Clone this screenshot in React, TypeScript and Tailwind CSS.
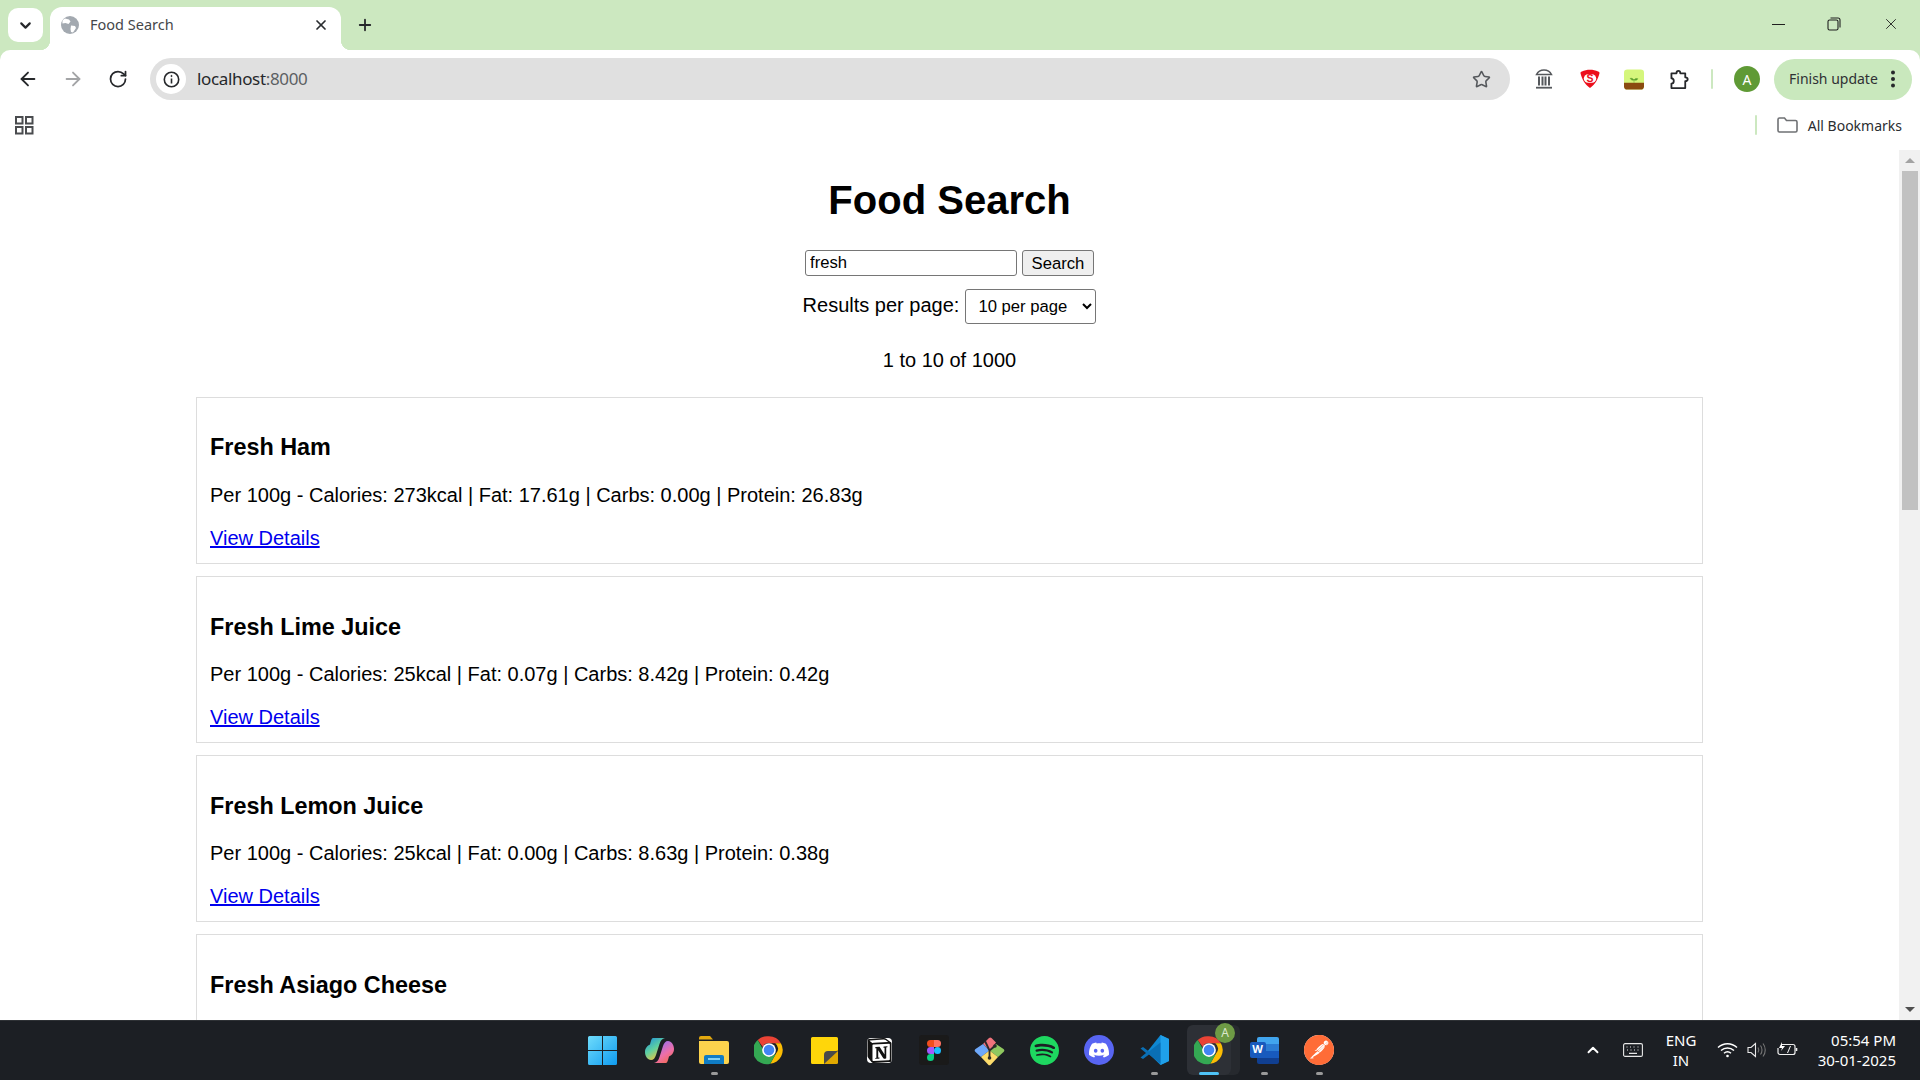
import { ArrowLeft, ArrowRight, ChevronDown, ChevronUp, Plus, RotateCw, Star, X } from 'lucide-react';
import { SiDiscord, SiNotion, SiPostman, SiSpotify } from 'react-icons/si';

const foods = [
  { name: 'Fresh Ham', info: 'Per 100g - Calories: 273kcal | Fat: 17.61g | Carbs: 0.00g | Protein: 26.83g' },
  { name: 'Fresh Lime Juice', info: 'Per 100g - Calories: 25kcal | Fat: 0.07g | Carbs: 8.42g | Protein: 0.42g' },
  { name: 'Fresh Lemon Juice', info: 'Per 100g - Calories: 25kcal | Fat: 0.00g | Carbs: 8.63g | Protein: 0.38g' },
];

function ChromeLogo({ size = 30 }: { size?: number }) {
  return (
    <svg width={size} height={size} viewBox="0 0 48 48">
      <path d="M24 2a22 22 0 0 1 19 11H24a11 11 0 0 0-10 6L6 8a22 22 0 0 1 18-6z" fill="#ea4335" />
      <path d="M43 13a22 22 0 0 1-17 33l9-16a11 11 0 0 0-1-17z" fill="#fbbc04" />
      <path d="M6 8l9 16a11 11 0 0 0 11 11l-0 0 9-5-9 16A22 22 0 0 1 6 8z" fill="#34a853" />
      <circle cx="24" cy="24" r="11" fill="#fff" />
      <circle cx="24" cy="24" r="8.5" fill="#4285f4" />
    </svg>
  );
}

function TabStrip() {
  return (
    <div className="flex h-[50px] shrink-0 bg-[#cce8c0]">
      <div className="ml-[8px] mt-[8px] flex h-[34px] w-[35px] items-center justify-center rounded-[10px] bg-white">
        <ChevronDown size={17} strokeWidth={3} className="text-[#26282b]" />
      </div>
      <div className="relative ml-[7px] mt-[7px] flex h-[43px] w-[291px] items-center rounded-t-[12px] bg-white pb-[7px] pl-[11px] pr-[12px]">
        <span className="absolute bottom-0 left-[-10px] h-[10px] w-[10px] bg-[radial-gradient(circle_at_0_0,#cce8c0_10px,#fff_10.5px)]" />
        <span className="absolute bottom-0 right-[-10px] h-[10px] w-[10px] bg-[radial-gradient(circle_at_100%_0,#cce8c0_10px,#fff_10.5px)]" />
        <svg width="18" height="18" viewBox="0 0 18 18">
          <circle cx="9" cy="9" r="9" fill="#a3a9b0" />
          <path d="M4 2.5l4 1 1.5 2-2 2.5-3-1-3 .5C1 5 2 3.5 4 2.5zM10 9.5l4 .5 1 2-3 4.5-2-.5-.5-3z" fill="#fff" />
        </svg>
        <span className="ml-[11px] flex-1 text-[14.500px] text-[#45474a]">Food Search</span>
        <X size={16} strokeWidth={2.6} className="text-[#2a2c2f]" />
      </div>
      <div className="ml-[15px] mt-[16px]">
        <Plus size={18} strokeWidth={2.4} className="text-[#26282b]" />
      </div>
      <div className="flex-1" />
      <div className="flex h-[48px] items-center">
        <div className="flex w-[56px] justify-center">
          <span className="h-[1px] w-[13px] bg-[#1f1f1f]" />
        </div>
        <div className="flex w-[56px] justify-center">
          <svg width="14" height="14" viewBox="0 0 14 14" fill="none" stroke="#1f1f1f" strokeWidth="1.1">
            <rect x="1" y="3" width="10" height="10" rx="1.6" />
            <path d="M3.5 1h7.5a2 2 0 0 1 2 2v7.5" />
          </svg>
        </div>
        <div className="mr-[1px] flex w-[57px] justify-center">
          <X size={18} strokeWidth={1.2} className="text-[#1f1f1f]" />
        </div>
      </div>
    </div>
  );
}

function Toolbar() {
  return (
    <div className="h-[50px] shrink-0 bg-[#cce8c0]">
      <div className="flex h-full items-start rounded-t-[10px] bg-white pt-[8px]">
        <div className="flex h-[42px] w-[150px] items-center pl-[17px]">
          <ArrowLeft size={22} strokeWidth={2} className="text-[#26282b]" />
          <ArrowRight size={22} strokeWidth={2} className="ml-[23px] text-[#a3a4a6]" />
          <RotateCw size={20} strokeWidth={2.1} className="ml-[24px] text-[#26282b]" />
        </div>
        <div className="flex h-[42px] w-[1360px] items-center rounded-full bg-[#e0e0e0] pl-[6px] pr-[19px]">
          <div className="flex h-[30px] w-[30px] items-center justify-center rounded-full bg-white">
            <svg width="17" height="17" viewBox="0 0 17 17" fill="none" stroke="#26282b" strokeWidth="1.6">
              <circle cx="8.5" cy="8.5" r="7.2" />
              <path d="M8.5 7.5v5" />
              <circle cx="8.5" cy="5" r="0.6" fill="#26282b" strokeWidth="1" />
            </svg>
          </div>
          <span className="ml-[11px] flex-1 text-[17px] tracking-[-0.35px] text-[#26282b]">
            localhost<span className="text-[#5c5f63]">:8000</span>
          </span>
          <Star size={19} strokeWidth={2} className="text-[#55585c]" />
        </div>
        <div className="flex h-[42px] items-center">
          <div className="ml-[24px] flex w-[20px] justify-center">
            <svg width="18" height="20" viewBox="0 0 18 20" fill="none" stroke="#55585c" strokeWidth="1.5">
              <path d="M1.5 5.5C3 2.5 6 1 9 1s6 1.5 7.5 4.5z" />
              <path d="M4 7.5v9M7.5 7.5v9M10.5 7.5v9M14 7.5v9" strokeWidth="2" />
              <path d="M1 18.7h16" strokeWidth="1.8" />
            </svg>
          </div>
          <div className="ml-[26px] flex w-[20px] justify-center">
            <svg width="21" height="20" viewBox="0 0 21 20">
              <path d="M2 2c5-2.200 12-2.200 17 0 1 0 1.800 1 1.400 2.300C19 10 16 16 10.500 19.500 5 16 2 10 .6 4.300.2 3 1 2 2 2z" fill="#ec0f1c" />
              <rect x="4" y="5" width="13" height="9" rx="4.500" fill="#fff" />
              <text x="10.500" y="13.200" textAnchor="middle" fontSize="11" fontWeight="700" fontFamily="'Liberation Sans',sans-serif" fill="#ec0f1c">S</text>
            </svg>
          </div>
          <div className="ml-[24px] flex w-[20px] justify-center">
            <svg width="21" height="21" viewBox="0 0 21 21">
              <rect width="21" height="21" rx="3.500" fill="#d5f67c" />
              <path d="M0 14h21v3.500a3.500 3.500 0 0 1-3.500 3.500h-14A3.500 3.500 0 0 1 0 17.500z" fill="#8a4b10" />
              <path d="M10.500 14v-3M10.500 11c-1-1.700-2.500-2-4-1.700.6 1.600 2.300 2.300 4 1.700zM10.500 11c1-1.500 2.500-1.800 4-1.300-.7 1.500-2.400 2-4 1.300z" fill="#5aa02c" stroke="#5aa02c" strokeWidth=".5" />
            </svg>
          </div>
          <div className="ml-[26px] flex w-[20px] justify-center">
            <svg width="21" height="21" viewBox="0 0 21 21" fill="none" stroke="#26282b" strokeWidth="1.9" strokeLinejoin="round">
              <path d="M1.500 4h5.300c0-3.300 4-3.300 4 0h5.200v4.200c3.400 0 3.400 4 0 4v7.300H1.500v-4.700c3.300 0 3.300-5.600 0-5.600z" />
            </svg>
          </div>
          <span className="ml-[21px] h-[20px] w-[2px] rounded-full bg-[#cce8c0]" />
          <div className="ml-[21px] flex h-[26px] w-[26px] items-center justify-center rounded-full bg-[#5f9a35] text-[14px] text-white">A</div>
          <div className="ml-[14px] flex h-[41px] w-[138px] items-center rounded-full bg-[#c9e8bd] pl-[15px]">
            <span className="pb-[1px] text-[14px] text-[#2f3134]">Finish update</span>
            <svg width="6" height="18" viewBox="0 0 6 18" className="ml-[12px]" fill="#26282b">
              <circle cx="3" cy="2.500" r="2" />
              <circle cx="3" cy="9" r="2" />
              <circle cx="3" cy="15.500" r="2" />
            </svg>
          </div>
        </div>
      </div>
    </div>
  );
}

function BookmarksBar() {
  return (
    <div className="flex h-[50px] shrink-0 items-center bg-white pl-[15px] pr-[18px]">
      <svg width="19" height="19" viewBox="0 0 19 19" fill="none" stroke="#4a4c4f" strokeWidth="2">
        <rect x="1" y="1" width="6.500" height="6.500" />
        <rect x="11" y="1" width="6.500" height="6.500" />
        <rect x="1" y="11" width="6.500" height="6.500" />
        <rect x="11" y="11" width="6.500" height="6.500" />
      </svg>
      <div className="flex-1" />
      <span className="h-[20px] w-[2px] rounded-full bg-[#cce8c0]" />
      <svg width="21" height="16" viewBox="0 0 21 16" fill="none" stroke="#6f7174" strokeWidth="1.600" className="ml-[20px]">
        <path d="M1 2.500C1 1.500 1.500 1 2.500 1h5l2 2.500h9c1 0 1.500.5 1.500 1.500v8.500c0 1-.5 1.500-1.500 1.500h-16C1.500 15 1 14.500 1 13.500z" />
      </svg>
      <span className="ml-[10px] text-[14px] text-[#2b2d30]">All Bookmarks</span>
    </div>
  );
}

function FoodCard({ name, info }: { name: string; info: string }) {
  return (
    <div className="mb-[11.900px] border border-[#ddd] px-[13px] pb-[12px] pt-[13.500px] leading-[23px]">
      <h3 className="mb-[22.400px] mt-[23.400px] text-[23.400px] font-bold leading-[27px] text-black">{name}</h3>
      <p className="mb-[20px] text-[20px] leading-[23px] text-black">{info}</p>
      <a href="#" className="text-[20px] leading-[23px] text-[#0000ee] underline">
        View Details
      </a>
    </div>
  );
}

function Page() {
  return (
    <div className="min-w-0 flex-1 overflow-hidden bg-white font-['Liberation_Sans',Arial,sans-serif]">
      <div className="mx-auto w-[1507px]">
        <h1 className="pt-[27px] text-center text-[40px] font-bold leading-[46px] text-black">Food Search</h1>
        <div className="mt-[27px] flex items-center justify-center">
          <input
            defaultValue="fresh"
            className="h-[26px] w-[212px] rounded-[3px] border border-[#767676] px-[4px] text-[16.670px] text-black outline-none"
          />
          <button className="ml-[5px] h-[26px] w-[72px] rounded-[3px] border border-[#767676] bg-[#efefef] pb-[3px] text-[16.670px] text-black">
            Search
          </button>
        </div>
        <div className="mt-[13px] flex items-center justify-center text-[20px] text-black">
          <span className="mb-[3px]">Results per page:</span>
          <select
            defaultValue="10"
            className="ml-[6px] h-[35px] w-[131px] rounded-[3px] border border-[#767676] bg-white pl-[8px] text-[16.670px] text-black"
          >
            <option value="10">10 per page</option>
            <option value="20">20 per page</option>
            <option value="50">50 per page</option>
          </select>
        </div>
        <div className="mt-[24.500px] text-center text-[20px] leading-[23px] text-black">1 to 10 of 1000</div>
        <div className="mt-[25px]">
          {foods.map((food) => (
            <FoodCard key={food.name} name={food.name} info={food.info} />
          ))}
          <div className="h-[167px] border border-[#ddd] px-[13px] pt-[13.500px]">
            <h3 className="mt-[23.400px] text-[23.400px] font-bold leading-[27px] text-black">Fresh Asiago Cheese</h3>
          </div>
        </div>
      </div>
    </div>
  );
}

function Scrollbar() {
  return (
    <div className="flex w-[21px] shrink-0 flex-col bg-[#f1f1f1]">
      <div className="flex h-[21px] items-center justify-center">
        <span className="h-0 w-0 border-x-[5px] border-b-[5px] border-x-transparent border-b-[#a3a3a3]" />
      </div>
      <div className="ml-[3px] h-[339px] w-[16px] bg-[#c1c1c1]" />
      <div className="flex-1" />
      <div className="flex h-[21px] items-center justify-center">
        <span className="h-0 w-0 border-x-[5px] border-t-[5px] border-x-transparent border-t-[#505050]" />
      </div>
    </div>
  );
}

function Tile({ dot, active, children }: { dot?: boolean; active?: boolean; children: React.ReactNode }) {
  return (
    <div className="relative flex h-[59px] w-[55px] items-center justify-center pb-[1px]">
      {active && (
        <>
          <span className="absolute left-[9px] top-[4px] h-[50px] w-[49px] rounded-[6px] bg-[#26292e]" />
          <span className="absolute left-[5px] top-[4px] h-[50px] w-[44px] rounded-[6px] bg-[#2d3036]" />
          <span className="absolute bottom-[5px] left-[17px] h-[3px] w-[20px] rounded-full bg-[#4fc3f7]" />
        </>
      )}
      <div className="relative flex items-center justify-center">{children}</div>
      {dot && <span className="absolute bottom-[5px] left-[24px] h-[3px] w-[7px] rounded-full bg-[#9a9a9a]" />}
    </div>
  );
}

function Taskbar() {
  return (
    <div className="grid h-[60px] shrink-0 grid-cols-[1fr_auto_1fr] border-t border-[#2e3135] bg-[#1c1f24]">
      <div />
      <div className="flex pl-[3px]">
        <Tile>
          <svg width="29" height="29" viewBox="0 0 29 29" className="mr-[3px]">
            <defs>
              <linearGradient id="win" x1="0" y1="0" x2="1" y2="1">
                <stop offset="0" stopColor="#6fdcfb" />
                <stop offset="1" stopColor="#0f9bf0" />
              </linearGradient>
            </defs>
            <path d="M0 1.500A1.500 1.500 0 0 1 1.500 0H14v14H0zM15 0h12.500A1.500 1.500 0 0 1 29 1.500V14H15zM0 15h14v14H1.500A1.500 1.500 0 0 1 0 27.500zM15 15h14v12.500a1.500 1.500 0 0 1-1.500 1.500H15z" fill="url(#win)" />
          </svg>
        </Tile>
        <Tile>
          <svg width="29" height="27" viewBox="0 0 29 27">
            <defs>
              <linearGradient id="cpa" x1="0" y1="0" x2="0.6" y2="1">
                <stop offset="0" stopColor="#1b8fe0" />
                <stop offset=".55" stopColor="#5fd0a0" />
                <stop offset="1" stopColor="#f5c33b" />
              </linearGradient>
              <linearGradient id="cpb" x1="0" y1="0" x2="0.6" y2="1">
                <stop offset="0" stopColor="#f46a3c" />
                <stop offset=".5" stopColor="#ee6fa8" />
                <stop offset="1" stopColor="#9a70ee" />
              </linearGradient>
            </defs>
            <path d="M8 1H20C17 1.500 15.500 4 14.500 7L11 18C10 21 8.500 23 6 23C2.500 23 0 19 0 15C0 11 2.500 8.500 5 7.500C6 4 6.500 1 8 1Z" fill="url(#cpa)" />
            <path d="M8 1H20C17 1.500 15.500 4 14.500 7L11 18C10 21 8.500 23 6 23C2.500 23 0 19 0 15C0 11 2.500 8.500 5 7.500C6 4 6.500 1 8 1Z" fill="url(#cpb)" transform="rotate(180 14.500 13.500)" />
          </svg>
        </Tile>
        <Tile dot>
          <svg width="30" height="28" viewBox="0 0 30 28">
            <path d="M0 2a2 2 0 0 1 2-2h9l3 3.500H0z" fill="#e3a90f" />
            <path d="M0 5h28a2 2 0 0 1 2 2v19a2 2 0 0 1-2 2H2a2 2 0 0 1-2-2z" fill="#fcd34d" />
            <path d="M5 21a2 2 0 0 1 2-2h16a2 2 0 0 1 2 2v7H5z" fill="#0f7cc4" />
            <rect x="9" y="22" width="12" height="2" fill="#7fd0f5" />
          </svg>
        </Tile>
        <Tile>
          <ChromeLogo />
        </Tile>
        <Tile>
          <svg width="27" height="27" viewBox="0 0 27 27">
            <path d="M1.500 0h24A1.500 1.500 0 0 1 27 1.500V13L13 27H1.500A1.500 1.500 0 0 1 0 25.500v-24A1.500 1.500 0 0 1 1.500 0z" fill="#ffd60a" />
            <path d="M27 13v12.500a1.500 1.500 0 0 1-1.500 1.500H13V19z" fill="#e0a800" />
            <path d="M13 27V18a4 4 0 0 1 4-4h10z" fill="#4a4a48" />
          </svg>
        </Tile>
        <Tile>
          <div className="flex h-[25px] w-[25px] items-center justify-center rounded-[4px] bg-white">
            <SiNotion size={25} className="text-[#111]" />
          </div>
        </Tile>
        <Tile>
          <div className="flex h-[30px] w-[30px] items-center justify-center rounded-[3px] bg-[#1a1a1a]">
            <svg width="14" height="21" viewBox="0 0 38 57">
              <path d="M19 28.500a9.500 9.500 0 1 1 19 0 9.500 9.500 0 0 1-19 0z" fill="#1abcfe" />
              <path d="M0 47.500A9.500 9.500 0 0 1 9.500 38H19v9.500a9.500 9.500 0 1 1-19 0z" fill="#0acf83" />
              <path d="M19 0v19h9.500a9.500 9.500 0 1 0 0-19z" fill="#ff7262" />
              <path d="M0 9.500A9.500 9.500 0 0 0 9.500 19H19V0H9.500A9.500 9.500 0 0 0 0 9.500z" fill="#f24e1e" />
              <path d="M0 28.500A9.500 9.500 0 0 0 9.500 38H19V19H9.500A9.500 9.500 0 0 0 0 28.500z" fill="#a259ff" />
            </svg>
          </div>
        </Tile>
        <Tile>
          <svg width="31" height="31" viewBox="0 0 31 31">
            <path d="M15.500 15.500L9 9l6-6a2 2 0 0 1 2.500 0L22 7.500z" fill="#f0737c" />
            <path d="M15.500 15.500L22 9l7.500 5a2 2 0 0 1 0 3L24 22z" fill="#8fc860" />
            <path d="M15.500 15.500L9 9l-7.500 5a2 2 0 0 0 0 3L7 22z" fill="#6ea8fa" />
            <path d="M15.500 15.500L7 22l7 7.500a2 2 0 0 0 3 0L24 22z" fill="#fcdc6c" />
            <path d="M11 6l4.500 9.500M15.500 15.500v7M15.500 15.500L21 11" stroke="#2b2b2b" strokeWidth="1.800" fill="none" />
            <circle cx="15.500" cy="23" r="1.800" fill="#2b2b2b" />
            <circle cx="21" cy="11" r="1.800" fill="#2b2b2b" />
          </svg>
        </Tile>
        <Tile>
          <SiSpotify size={29} className="text-[#1ed760]" />
        </Tile>
        <Tile>
          <div className="flex h-[30px] w-[30px] items-center justify-center rounded-full bg-[#5865f2]">
            <SiDiscord size={20} className="text-white" />
          </div>
        </Tile>
        <Tile dot>
          <svg width="30" height="30" viewBox="0 0 30 30">
            <path d="M21.500 0L30 4v22l-8.500 4L8 17l13.500-17z" fill="#0e87d2" />
            <path d="M21.500 0L21.500 30 30 26V4z" fill="#1fa0ea" />
            <path d="M21.500 7.500L10 16.500 4 12 1.500 13.500 7 18l-5.500 4.500L4 24l6-4.500 11.500 9z" fill="#0a6fb5" />
          </svg>
        </Tile>
        <Tile active>
          <ChromeLogo />
          <span className="absolute right-[-11px] top-[-12px] flex h-[20px] w-[20px] items-center justify-center rounded-full bg-[#6e9a45] text-[12px] text-[#dce8cc]">A</span>
        </Tile>
        <Tile dot>
          <div className="relative h-[27px] w-[29px]">
            <div className="ml-[7px] flex h-[27px] w-[22px] flex-col rounded-[2px]">
              <span className="h-[7px] rounded-t-[2px] bg-[#41a5ee]" />
              <span className="h-[7px] bg-[#2b7cd3]" />
              <span className="h-[7px] bg-[#185abd]" />
              <span className="h-[6px] rounded-b-[2px] bg-[#103f91]" />
            </div>
            <span className="absolute left-0 top-[5px] flex h-[16px] w-[16px] items-center justify-center rounded-[2px] bg-[#185abd] text-[11px] font-bold text-white">W</span>
          </div>
        </Tile>
        <Tile dot>
          <div className="flex h-[30px] w-[30px] items-center justify-center rounded-full bg-white">
            <SiPostman size={30} className="text-[#ff6c37]" />
          </div>
        </Tile>
      </div>
      <div className="flex items-center justify-end pb-[2px] pr-[24px] text-[15px] leading-[20px] text-white">
        <ChevronUp size={18} strokeWidth={2.500} className="text-white" />
        <div className="ml-[21px]">
          <svg width="20" height="14" viewBox="0 0 20 14" fill="none" stroke="#e8e8e8" strokeWidth="1.100">
            <rect x=".6" y=".6" width="18.800" height="12.800" rx="1.500" />
            <path d="M3.500 4h1M7 4h1M10.500 4h1M14.500 4h1M4 7h1M7.500 7h1M11 7h1M14.500 7h1M6 10.300h8" strokeWidth="1.200" />
          </svg>
        </div>
        <div className="ml-[22px] w-[32px] text-center">
          <div>ENG</div>
          <div>IN</div>
        </div>
        <div className="ml-[20px]">
          <svg width="21" height="16" viewBox="0 0 21 16" fill="none" stroke="#fff" strokeWidth="1.500">
            <path d="M1 5.500c5.500-5 13.500-5 19 0M4 8.500c3.700-3.300 9.300-3.300 13 0M7 11.300c2-1.700 5-1.700 7 0" />
            <circle cx="10.500" cy="14" r="1.300" fill="#fff" stroke="none" />
          </svg>
        </div>
        <div className="ml-[9px]">
          <svg width="20" height="16" viewBox="0 0 20 16" fill="none" stroke="#e8e8e8" strokeWidth="1.100">
            <path d="M1 5.500h3l4.500-4v13L4 10.500H1z" />
            <path d="M11 5.500c1 1.500 1 3.500 0 5M13.500 3.500c2 2.500 2 6.500 0 9M16 1.500c3 3.700 3 9.300 0 13" stroke="#777" />
          </svg>
        </div>
        <div className="ml-[10px]">
          <svg width="21" height="15" viewBox="0 0 21 15" fill="none" stroke="#f0f0f0" strokeWidth="1.200">
            <path d="M5 2.500h11a2 2 0 0 1 2 2v6a2 2 0 0 1-2 2H3a2 2 0 0 1-2-2V6" />
            <path d="M19.500 6v3" strokeWidth="1.600" />
            <path d="M5 0L2 6h3l-1 3 4-5H5z" fill="#fff" stroke="none" />
            <path d="M10 11l3-7h1l-3 7z" fill="#fff" stroke="none" />
          </svg>
        </div>
        <div className="ml-[18px] w-[80px] text-right">
          <div>05:54 PM</div>
          <div>30-01-2025</div>
        </div>
      </div>
    </div>
  );
}

export default function App() {
  return (
    <div className="flex h-screen w-screen flex-col overflow-hidden bg-white font-['Noto_Sans','Open_Sans',sans-serif]">
      <TabStrip />
      <Toolbar />
      <BookmarksBar />
      <div className="flex min-h-0 flex-1">
        <Page />
        <Scrollbar />
      </div>
      <Taskbar />
    </div>
  );
}
